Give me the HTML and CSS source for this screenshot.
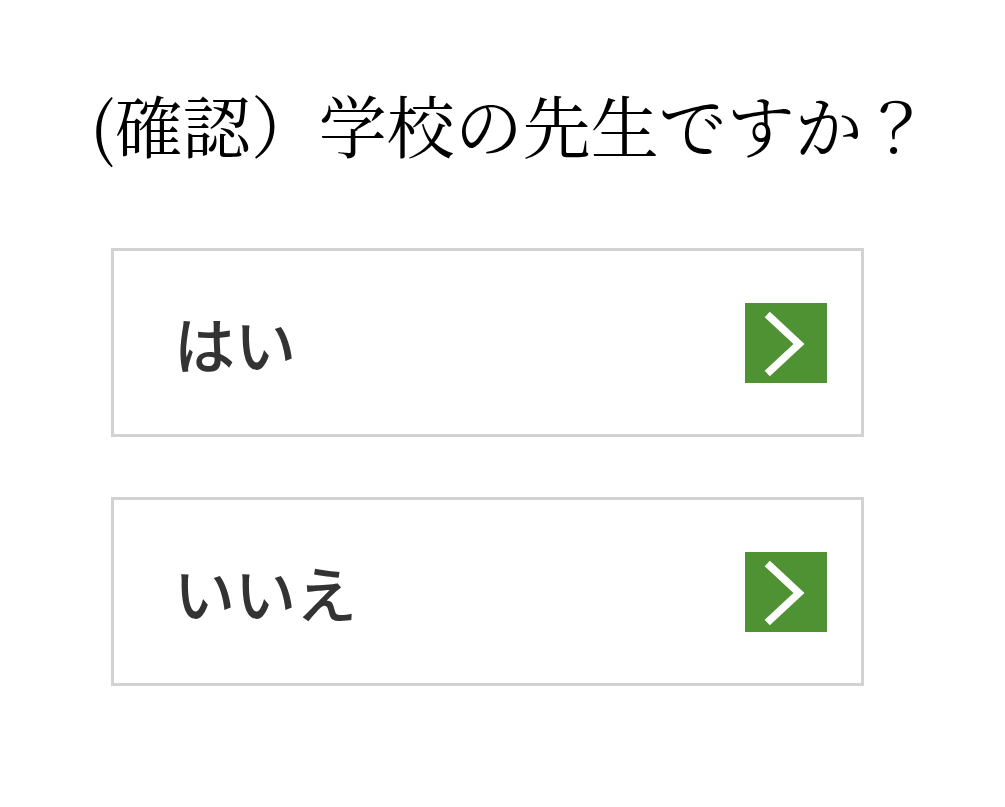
FILE: index.html
```html
<!DOCTYPE html>
<html lang="ja">
<head>
<meta charset="utf-8">
<link rel="stylesheet" href="styles.css">
</head>
<body>
<main class="page">
  <h1 class="title">(確認）学校の先生ですか？</h1>
  <div class="choices">
    <a class="choice" href="#">
      <span class="label">はい</span>
      <span class="go"><svg viewBox="0 0 82 80" width="82" height="80"><path d="M25 14 L54 41 L25 68" fill="none" stroke="#fff" stroke-width="7.5" stroke-linecap="square"/></svg></span>
    </a>
    <a class="choice" href="#">
      <span class="label">いいえ</span>
      <span class="go"><svg viewBox="0 0 82 80" width="82" height="80"><path d="M25 14 L54 41 L25 68" fill="none" stroke="#fff" stroke-width="7.5" stroke-linecap="square"/></svg></span>
    </a>
  </div>
</main>
</body>
</html>
```
FILE: styles.css
```css
html, body {
  margin: 0;
  padding: 0;
  background: #fff;
}
.page {
  width: 1005px;
  height: 807px;
  padding-top: 78px;
  box-sizing: border-box;
}
.title {
  margin: 0;
  padding-left: 90px;
  font-family: "Noto Serif CJK JP", "Noto Serif JP", "Liberation Serif", "Noto Sans CJK JP", serif;
  font-weight: normal;
  font-size: 68px;
  line-height: 92px;
  color: #000;
  white-space: nowrap;
}
.choices {
  margin-top: 78px;
  margin-left: 111px;
  width: 753px;
  display: flex;
  flex-direction: column;
  gap: 60px;
}
.choice {
  display: flex;
  align-items: center;
  justify-content: space-between;
  height: 189px;
  box-sizing: border-box;
  border: 3px solid #d2d2d2;
  padding: 0 34px 0 60px;
  text-decoration: none;
}
.label {
  font-family: "Noto Sans CJK JP", "Noto Sans", sans-serif;
  font-weight: 500;
  font-size: 61px;
  color: #333;
  line-height: 1;
}
.go {
  width: 82px;
  height: 80px;
  background: #4f9234;
  display: block;
}
.go svg {
  display: block;
}
```
